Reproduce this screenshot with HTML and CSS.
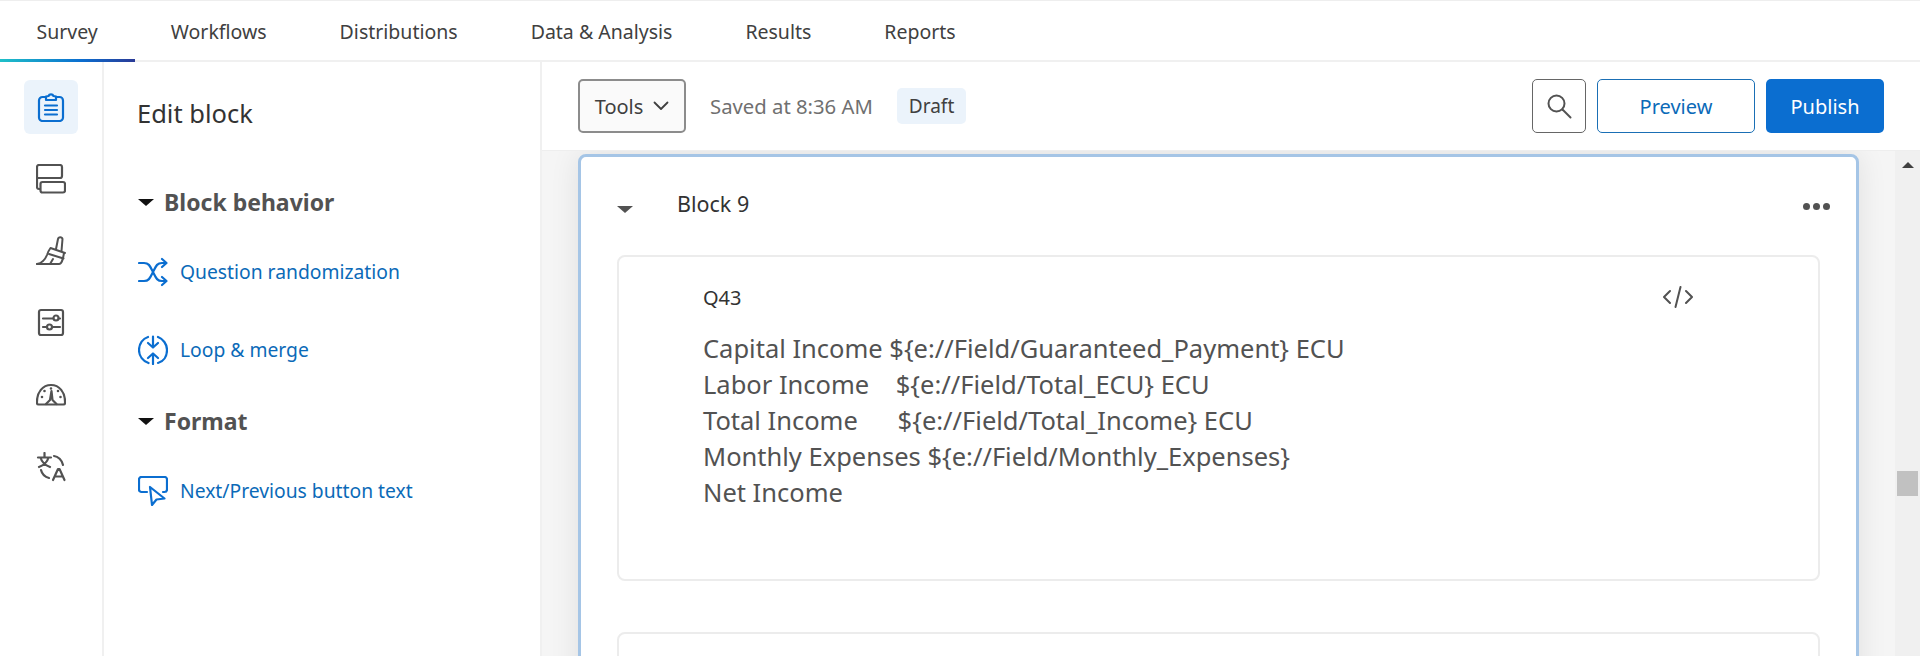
FILE: index.html
```html
<!DOCTYPE html>
<html lang="en">
<head>
<meta charset="utf-8">
<title>Survey</title>
<link rel="stylesheet" href="styles.css">
</head>
<body>
<div class="app">
  <nav class="tabs">
    <a class="tab active">Survey</a>
    <a class="tab">Workflows</a>
    <a class="tab">Distributions</a>
    <a class="tab">Data &amp; Analysis</a>
    <a class="tab">Results</a>
    <a class="tab">Reports</a>
  </nav>
  <div class="body">
    <aside class="rail">
      <div class="rail-item selected">
        <svg class="ic30" viewBox="0 0 30 30" fill="none" stroke="#0b6ed0" stroke-width="2.200" stroke-linejoin="round" stroke-linecap="round"><path d="M10 5H6.500A3.500 3.500 0 0 0 3 8.500v17A3.500 3.500 0 0 0 6.500 29h17a3.500 3.500 0 0 0 3.500-3.500v-17A3.500 3.500 0 0 0 23.500 5H20"/><path d="M10 8V4.500l2.500-.5a2.700 2.700 0 0 1 5 0l2.500.5V8z"/><path d="M9 13.500h12M9 18h12M9 22.500h12"/></svg>
      </div>
      <div class="rail-item">
        <svg class="ic30" viewBox="0 0 30 30" fill="none" stroke="#525252" stroke-width="2.200" stroke-linejoin="round"><path d="M1 14V3a2 2 0 0 1 2-2h21a2 2 0 0 1 2 2v9a2 2 0 0 1-2 2H1v9a2 2 0 0 0 2 2h1.500"/><rect x="4.500" y="18" width="24.500" height="10.500" rx="2"/></svg>
      </div>
      <div class="rail-item">
        <svg class="ic30" viewBox="0 0 30 30" fill="none" stroke="#525252" stroke-width="2" stroke-linejoin="round" stroke-linecap="round"><path d="M1 28h22c3 0 4-5 5-11"/><path d="M1 28c5-1 8-4 10-9 1-3 2-5 3.500-7L29 17"/><path d="M13 18l14.500 4.500"/><path d="M20 13l2-10c.5-2.500 4-2.500 4.500 0l-1 12"/><path d="M14 28l3-5"/></svg>
      </div>
      <div class="rail-item">
        <svg class="ic30" viewBox="0 0 30 30" fill="none" stroke="#525252" stroke-width="2.200" stroke-linejoin="round" stroke-linecap="round"><rect x="3" y="2" width="24" height="25" rx="2"/><path d="M7 10.500h10M23 10.500h1M7 19h3.500M16.500 19h7.500"/><circle cx="20" cy="10" r="2.500"/><circle cx="13.500" cy="19" r="2.500"/></svg>
      </div>
      <div class="rail-item">
        <svg class="ic30" viewBox="0 0 30 30" fill="none" stroke="#525252" stroke-width="2.200" stroke-linejoin="round" stroke-linecap="round"><path d="M1 23c-.500-11 6-18 14-18s14.500 7 14 18a1.500 1.500 0 0 1-1.500 1.500h-25A1.500 1.500 0 0 1 1 23z"/><path d="M10 24l4-4 1.500-9 1 9 4 4"/><path d="M15 8.500v0M8.500 11v0M22 11v0M6 17v0M24.500 17v0" stroke-width="2.600"/></svg>
      </div>
      <div class="rail-item">
        <svg class="ic30" viewBox="0 0 30 30" fill="none" stroke="#525252" stroke-width="2.200" stroke-linejoin="round" stroke-linecap="round"><path d="M2 5.500h13M8.500 1v4.500M12.500 5.500c-1 4-5 8-9.500 9.500M4.500 5.500c1 4 5 8 9.500 9.500"/><path d="M18 4c4 .5 8 4 9 9M5 18c1 4 4 7 8 8"/><path d="M17 28l5-11h1.500l5 11M19 24.500h8"/></svg>
      </div>
    </aside>
    <section class="panel">
      <h1 class="panel-title">Edit block</h1>
      <h2 class="group group-first"><span class="caret"></span>Block behavior</h2>
      <a class="link link-first">
        <svg class="ic30" viewBox="0 0 30 30" fill="none" stroke="#0b6ed0" stroke-width="2.200" stroke-linejoin="round" stroke-linecap="round"><path d="M1 6h5c5 0 6 3 9 9s4 9 9 9h4"/><path d="M1 24h5c5 0 6-3 9-9s4-9 9-9h4"/><path d="M24 2l4.500 4-4.500 4M24 20l4.500 4-4.500 4"/></svg>
        Question randomization</a>
      <a class="link link-second">
        <svg class="ic30" viewBox="0 0 30 30" fill="none" stroke="#0b6ed0" stroke-width="2.200" stroke-linejoin="round" stroke-linecap="round"><path d="M10 2C5 3.500 1 8.500 1 15c0 6 4 11 9.500 13"/><path d="M20 28c5.500-1.500 9-6.500 9-13 0-6-4-11-9-13"/><path d="M15 1.500V12M10 8l5 4.500L20 8"/><path d="M15 29V18.500M10 23l5-4.500 5 4.500"/></svg>
        Loop &amp; merge</a>
      <h2 class="group group-second"><span class="caret"></span>Format</h2>
      <a class="link link-third">
        <svg class="ic30" viewBox="0 0 30 30" fill="none" stroke="#0b6ed0" stroke-width="2.200" stroke-linejoin="round" stroke-linecap="round"><path d="M9 16H3.500A2.500 2.500 0 0 1 1 13.500v-10A2.500 2.500 0 0 1 3.500 1h23A2.500 2.500 0 0 1 29 3.500v10a2.500 2.500 0 0 1-2.500 2.500H25"/><path d="M12 11l2 18 4.500-5.500 8-1z"/></svg>
        Next/Previous button text</a>
    </section>
    <main class="main">
      <header class="toolbar">
        <button class="btn tools">Tools
          <svg class="chev" viewBox="0 0 16 10" fill="none" stroke="#404040" stroke-width="1.800" stroke-linecap="round" stroke-linejoin="round"><path d="M1.500 1.500L8 8l6.500-6.500"/></svg>
        </button>
        <span class="saved">Saved at 8:36 AM</span>
        <span class="badge">Draft</span>
        <button class="btn search">
          <svg class="ic26" viewBox="0 0 26 26" fill="none" stroke="#525252" stroke-width="2" stroke-linecap="round"><circle cx="10.500" cy="10.500" r="8"/><path d="M16.500 16.500l8 8"/></svg>
        </button>
        <button class="btn preview">Preview</button>
        <button class="btn publish">Publish</button>
      </header>
      <div class="canvas">
        <div class="stage">
          <article class="block">
            <div class="block-head">
              <span class="block-caret"></span>
              <span class="block-name">Block 9</span>
              <span class="dots"><i></i><i></i><i></i></span>
            </div>
            <div class="question">
              <div class="q-head">
                <span class="q-id">Q43</span>
                <svg class="code" viewBox="0 0 30 22" fill="none" stroke="#525252" stroke-width="2" stroke-linecap="round" stroke-linejoin="round"><path d="M7 5l-6 6 6 6M23 5l6 6-6 6M17.500 1l-5 20"/></svg>
              </div>
              <div class="q-text">Capital Income ${e://Field/Guaranteed_Payment} ECU
Labor Income    ${e://Field/Total_ECU} ECU
Total Income      ${e://Field/Total_Income} ECU
Monthly Expenses ${e://Field/Monthly_Expenses}
Net Income</div>
            </div>
            <div class="question next"></div>
          </article>
        </div>
        <div class="scrollbar">
          <span class="sb-up"></span>
          <span class="sb-thumb"></span>
        </div>
      </div>
    </main>
  </div>
</div>
</body>
</html>
```

FILE: styles.css
```css
* { box-sizing: border-box; }
html, body { margin: 0; height: 100%; overflow: hidden; background: #fff; }
body { font-family: "Noto Sans", "Open Sans", sans-serif; color: #404040; }
.app { height: 656px; display: flex; flex-direction: column; }

.tabs { height: 62px; flex: none; display: flex; border-top: 1px solid #eee; border-bottom: 2px solid #f0f0f0; }
.tab { position: relative; padding: 17px 0 0; margin-left: 36.500px; margin-right: 36.500px; font-size: 19.500px; line-height: 28px; color: #404040; }
.tab.active::after { content: ""; position: absolute; left: -37px; right: -37px; bottom: -2px; height: 3px; background: linear-gradient(90deg, #1fc0c8, #0b6ed0 60%, #2a3a96); }

.body { flex: 1; display: flex; min-height: 0; }

.rail { width: 104px; flex: none; border-right: 2px solid #f0f0f0; padding: 18px 0 0 24px; display: flex; flex-direction: column; gap: 18px; }
.rail-item { width: 54px; height: 54px; display: flex; align-items: center; justify-content: center; border-radius: 6px; }
.rail-item.selected { background: #ebf3fb; }
.ic30 { width: 30px; height: 30px; flex: none; }
.ic26 { width: 26px; height: 26px; }

.panel { width: 438px; flex: none; border-right: 2px solid #f0f0f0; padding: 35px 0 0 33px; }
.panel-title { margin: 0; font-size: 25.500px; line-height: 32px; font-weight: 400; color: #333; }
.group { margin: 0; display: flex; align-items: center; gap: 10px; font-size: 23px; line-height: 30px; font-weight: 700; color: #525252; }
.group-first { margin-top: 58px; }
.group-second { margin-top: 41px; }
.caret { width: 0; height: 0; border: 8px solid transparent; border-top: 7px solid #111; border-bottom: 0; margin-left: 1px; }
.link { display: flex; align-items: center; gap: 12px; font-size: 19.300px; line-height: 30px; color: #0b6ab8; }
.link .ic30 { margin-left: 1px; }
.link-first { margin-top: 40px; }
.link-second { margin-top: 48px; }
.link-third { margin-top: 40px; }

.main { flex: 1; min-width: 0; display: flex; flex-direction: column; }
.toolbar { height: 89px; flex: none; display: flex; align-items: center; padding: 0 36px 0 36px; margin-bottom: 0; border-bottom: 1px solid #eee; }
.btn { font: inherit; height: 54px; border-radius: 5px; font-size: 20px; display: flex; align-items: center; justify-content: center; background: #fff; }
.tools { width: 108px; border: 2px solid #8c8c8c; background: #fafafa; color: #404040; gap: 10px; }
.chev { width: 16px; height: 10px; }
.saved { margin-left: 24px; font-size: 20.300px; color: #707070; }
.badge { margin-left: 24px; padding: 0 12px; height: 36px; line-height: 36px; background: #ebf3fb; border-radius: 5px; font-size: 19px; color: #404040; }
.search { margin-left: auto; width: 54px; border: 1.500px solid #666; }
.preview { margin-left: 11px; width: 158px; border: 1.500px solid #1a6fb5; color: #0b6ab8; }
.publish { margin-left: 11px; width: 118px; border: 0; background: #0b6ed0; color: #fff; }

.canvas { flex: 1; min-height: 0; display: flex; background: #f5f5f5; }
.stage { flex: 1; min-width: 0; padding: 3px 0 0 36px; overflow: hidden; }
.block { width: 1281px; height: 560px; background: #fff; border: 3px solid #a5c5e6; border-radius: 8px; padding: 0 36px 0 36px; box-shadow: 0 0 30px rgba(0,0,0,.09); }
.block-head { height: 98px; display: flex; align-items: center; padding-bottom: 6px; }
.block-caret { width: 0; height: 0; border: 8px solid transparent; border-top: 7px solid #525252; border-bottom: 0; margin: 12px 0 0 0; }
.block-name { margin-left: 44px; font-size: 21.500px; color: #333; }
.dots { margin-left: auto; margin-right: -10px; display: flex; gap: 3px; margin-top: 7px; }
.dots i { width: 7px; height: 7px; border-radius: 50%; background: #525252; }
.question { border: 2px solid #ececec; border-radius: 8px; height: 326px; padding: 0 0 0 84px; }
.question.next { margin-top: 51px; height: 200px; }
.q-head { height: 80px; display: flex; align-items: center; }
.q-id { font-size: 20px; color: #333; }
.code { width: 30px; height: 22px; margin-left: auto; margin-right: 125px; }
.q-text { white-space: pre; font-size: 25.500px; line-height: 36px; color: #525252; margin-top: -7px; }

.scrollbar { position: relative; width: 25px; flex: none; background: #f0f0f0; }
.sb-up { position: absolute; left: 7px; top: 11px; width: 0; height: 0; border: 6px solid transparent; border-bottom: 6px solid #404040; border-top: 0; }
.sb-thumb { position: absolute; left: 2px; top: 320px; width: 21px; height: 25px; background: #c1c1c1; }
```
